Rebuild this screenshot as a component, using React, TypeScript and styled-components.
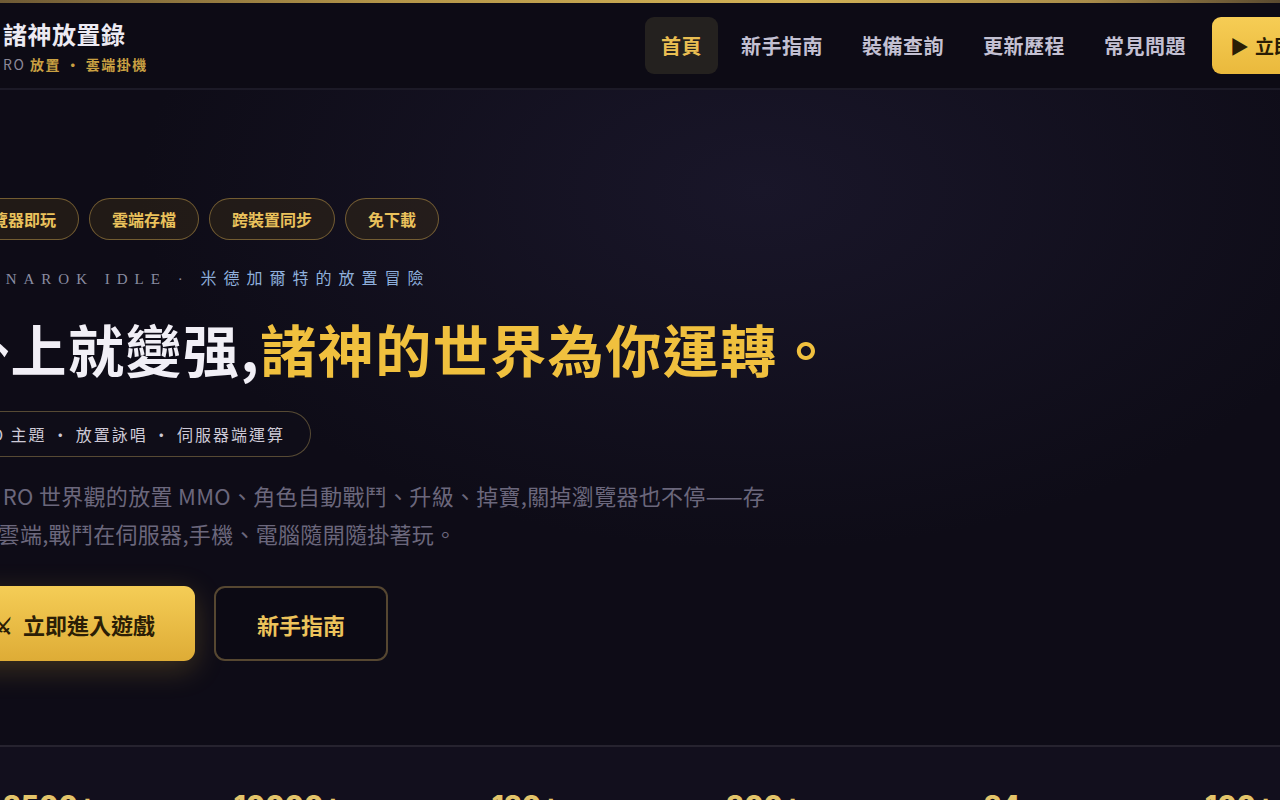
import React from "react";
import styled, { createGlobalStyle } from "styled-components";

const Global = createGlobalStyle`
  html, body { margin: 0; padding: 0; background: #0e0c17; }
  body {
    font-family: "Noto Sans CJK TC", "Noto Sans", sans-serif;
    overflow: hidden;
  }
  * { box-sizing: border-box; }
`;

const Page = styled.div`
  width: 1280px;
  height: 800px;
  overflow: hidden;
  background:
    radial-gradient(ellipse 620px 360px at 760px 190px, rgba(34, 30, 56, 0.55) 0%, rgba(34, 30, 56, 0) 100%),
    #0e0c17;
`;

const TopBar = styled.div`
  height: 3px;
  background: linear-gradient(90deg, #6e5a35 0%, #b39549 30%, #d2b256 62%, #a88c4a 85%, #5a4a30 100%);
`;

const Header = styled.header`
  height: 87px;
  background: #0d0b15;
  border-bottom: 2px solid #1c1a27;
`;

const HeaderInner = styled.div`
  margin-left: -47px;
  width: 1400px;
  height: 100%;
  display: flex;
  align-items: center;
`;

const Brand = styled.div`
  display: flex;
  align-items: center;
  gap: 10px;
  margin-top: 2px;
`;

const BrandMark = styled.div`
  width: 40px;
  height: 40px;
  border-radius: 10px;
  background: linear-gradient(135deg, #f3c94f, #c8962c);
`;

const BrandText = styled.div`
  display: flex;
  flex-direction: column;
  gap: 9px;
`;

const BrandTitle = styled.div`
  font-size: 24px;
  font-weight: 700;
  color: #eceaf2;
  letter-spacing: 0.5px;
  line-height: 26px;
`;

const BrandSub = styled.div`
  font-size: 14px;
  font-weight: 700;
  color: #c9a042;
  letter-spacing: 1.5px;
  line-height: 16px;
  span { color: #8c8898; font-weight: 400; }
`;

const Nav = styled.nav`
  margin-left: auto;
  display: flex;
  align-items: center;
  gap: 7px;
`;

const NavItem = styled.a<{ $active?: boolean }>`
  height: 57px;
  padding: 0 16px;
  display: flex;
  align-items: center;
  border-radius: 9px;
  font-size: 20px;
  font-weight: 700;
  letter-spacing: 0.5px;
  color: ${(p) => (p.$active ? "#e9be52" : "#c3c0d2")};
  background: ${(p) => (p.$active ? "#24211f" : "transparent")};
  text-decoration: none;
`;

const NavCta = styled.a`
  margin-left: 3px;
  height: 57px;
  padding: 0 22px 0 18px;
  display: flex;
  align-items: center;
  gap: 6px;
  border-radius: 9px;
  background: linear-gradient(180deg, #f6cd55, #eab93c);
  color: #2a1d05;
  font-size: 19px;
  font-weight: 700;
  text-decoration: none;
`;

const Hero = styled.section`
  padding: 108px 0 84px;
`;

const HeroInner = styled.div`
  margin-left: -47px;
  display: flex;
  flex-direction: column;
  align-items: flex-start;
`;

const Pills = styled.div`
  display: flex;
  gap: 10px;
`;

const Pill = styled.span`
  height: 42px;
  padding: 0 22px;
  display: flex;
  align-items: center;
  border-radius: 21px;
  border: 1.5px solid rgba(196, 158, 76, 0.5);
  background: rgba(58, 44, 22, 0.45);
  color: #eac25c;
  font-size: 16px;
  font-weight: 700;
`;

const Eyebrow = styled.div`
  margin-top: 26px;
  font-family: "Liberation Serif", "DejaVu Serif", serif;
  font-size: 15px;
  letter-spacing: 7px;
  color: #8a8da2;
  line-height: 22px;
  span {
    font-family: "Noto Sans CJK TC", sans-serif;
    font-size: 16px;
    color: #8eafdc;
    letter-spacing: 7px;
  }
`;

const Title = styled.h1`
  margin: 24px 0 0;
  font-size: 56px;
  font-weight: 700;
  line-height: 67px;
  color: #f1eff6;
  letter-spacing: 1.5px;
  span { color: #f0c03e; }
`;

const Tagline = styled.div`
  margin-top: 30px;
  height: 46px;
  padding: 0 25px;
  display: flex;
  align-items: center;
  border-radius: 23px;
  border: 1.5px solid rgba(160, 135, 80, 0.5);
  background: rgba(16, 14, 26, 0.7);
  color: #cdc9d6;
  font-size: 16px;
  letter-spacing: 2px;
`;

const Lead = styled.p`
  margin: 19px 0 0;
  max-width: 820px;
  font-size: 22px;
  letter-spacing: 0.3px;
  line-height: 38px;
  color: #6b677c;
`;

const Actions = styled.div`
  margin-top: 34px;
  display: flex;
  gap: 19px;
`;

const PrimaryButton = styled.a`
  height: 75px;
  padding: 0 40px;
  display: flex;
  align-items: center;
  gap: 10px;
  border-radius: 11px;
  background: linear-gradient(180deg, #f5cd56 0%, #deac36 100%);
  box-shadow: 0 8px 30px rgba(235, 185, 60, 0.22);
  color: #2b1e06;
  font-size: 22px;
  font-weight: 700;
  text-decoration: none;
`;

const SecondaryButton = styled.a`
  height: 75px;
  padding: 0 41px;
  display: flex;
  align-items: center;
  border-radius: 11px;
  border: 2px solid rgba(190, 158, 90, 0.42);
  background: #0c0a14;
  color: #ecc35b;
  font-size: 22px;
  font-weight: 700;
  text-decoration: none;
`;

const Stats = styled.section`
  border-top: 2px solid #26232f;
  background: #120f1d;
  height: 60px;
`;

const StatsGrid = styled.div`
  margin-left: -69px;
  width: 1428px;
  padding-top: 45px;
  display: grid;
  grid-template-columns: repeat(6, 1fr);
`;

const StatValue = styled.div`
  text-align: center;
  font-family: "Inter", "Liberation Sans", sans-serif;
  font-size: 28px;
  font-weight: 800;
  line-height: 1;
  color: #e3c46a;
`;

const navItems = ["首頁", "新手指南", "裝備查詢", "更新歷程", "常見問題"];
const pills = ["瀏覽器即玩", "雲端存檔", "跨裝置同步", "免下載"];
const stats = ["2500+", "10000+", "120+", "300+", "24", "100+"];

export default function App() {
  return (
    <>
      <Global />
      <Page>
        <TopBar />
        <Header>
          <HeaderInner>
            <Brand>
              <BrandMark />
              <BrandText>
                <BrandTitle>諸神放置錄</BrandTitle>
                <BrandSub>
                  <span>RO</span> 放置 · 雲端掛機
                </BrandSub>
              </BrandText>
            </Brand>
            <Nav>
              {navItems.map((n, i) => (
                <NavItem key={n} $active={i === 0}>
                  {n}
                </NavItem>
              ))}
              <NavCta>
                <span>▶</span>立即遊玩
              </NavCta>
            </Nav>
          </HeaderInner>
        </Header>
        <Hero>
          <HeroInner>
            <Pills>
              {pills.map((p) => (
                <Pill key={p}>{p}</Pill>
              ))}
            </Pills>
            <Eyebrow>
              RAGNAROK IDLE · <span>米德加爾特的放置冒險</span>
            </Eyebrow>
            <Title>
              掛上就變强,<span>諸神的世界為你運轉。</span>
            </Title>
            <Tagline>RO 主題 · 放置詠唱 · 伺服器端運算</Tagline>
            <Lead>
              一款 RO 世界觀的放置 MMO、角色自動戰鬥、升級、掉寶,關掉瀏覽器也不停——存檔在雲端,戰鬥在伺服器,手機、電腦隨開隨掛著玩。
            </Lead>
            <Actions>
              <PrimaryButton>
                <span>⚔</span>立即進入遊戲
              </PrimaryButton>
              <SecondaryButton>新手指南</SecondaryButton>
            </Actions>
          </HeroInner>
        </Hero>
        <Stats>
          <StatsGrid>
            {stats.map((s) => (
              <StatValue key={s}>{s}</StatValue>
            ))}
          </StatsGrid>
        </Stats>
      </Page>
    </>
  );
}
